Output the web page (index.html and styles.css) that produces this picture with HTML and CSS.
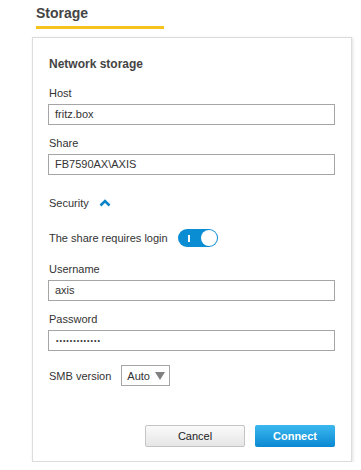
FILE: index.html
```html
<!DOCTYPE html>
<html lang="en">
<head>
    <meta charset="UTF-8">
    <meta name="viewport" content="width=device-width, initial-scale=1.0">
    <title>Storage</title>
    <link rel="stylesheet" href="styles.css">
</head>
<body>
    <div class="page">
        <div class="tab">
            <h2>Storage</h2>
        </div>

        <div class="card">
            <h3 class="card-title">Network storage</h3>

            <div class="field">
                <label>Host</label>
                <div class="input">fritz.box</div>
            </div>
            <div class="field share">
                <label>Share</label>
                <div class="input">FB7590AX\AXIS</div>
            </div>

            <div class="section-toggle">
                <span>Security</span>
                <svg class="chevron" width="12" height="8" viewBox="0 0 12 8">
                    <path d="M1.5 6.5 L6 2 L10.5 6.5" fill="none" stroke="#0a84c6" stroke-width="2.6"/>
                </svg>
            </div>

            <div class="switch-row">
                <span>The share requires login</span>
                <div class="switch on">
                    <span class="switch-mark"></span>
                    <span class="switch-knob"></span>
                </div>
            </div>

            <div class="field user">
                <label>Username</label>
                <div class="input">axis</div>
            </div>
            <div class="field share">
                <label>Password</label>
                <div class="input password">•••••••••••••</div>
            </div>

            <div class="select-row">
                <span>SMB version</span>
                <div class="select">Auto <span class="arrow"></span></div>
            </div>

            <div class="actions">
                <button class="btn">Cancel</button>
                <button class="btn primary">Connect</button>
            </div>
        </div>
    </div>
</body>
</html>
```

FILE: styles.css
```css
* {
    margin: 0;
    padding: 0;
    box-sizing: border-box;
}

body {
    font-family: "Liberation Sans", Arial, sans-serif;
    background: #fff;
    color: #333;
    font-size: 11px;
}

.page {
    padding: 5px 0 0 32px;
    width: 361px;
}

.tab {
    margin-left: 4px;
    width: 128px;
    border-bottom: 3px solid #f7c11e;
    padding-bottom: 4px;
}

.tab h2 {
    font-size: 14px;
    line-height: 17px;
    color: #444;
}

.card {
    margin-top: 8px;
    width: 320px;
    border: 1px solid #dcdcdc;
    box-shadow: 1px 1px 3px rgba(0, 0, 0, 0.12);
    padding: 18px 16px 14px 15px;
}

.card-title {
    font-size: 12px;
    line-height: 16px;
    color: #444;
    margin-left: 1px;
}

.field {
    margin-top: 14px;
}

.field.share {
    margin-top: 11px;
}

.field.user {
    margin-top: 15px;
}

.field label {
    display: block;
    margin-left: 1px;
    line-height: 14px;
    margin-bottom: 4px;
}

.input {
    height: 21px;
    border: 1px solid #a5a5a5;
    padding: 0 6px;
    line-height: 19px;
    font-size: 11px;
    color: #333;
}

.input.password {
    font-size: 7px;
    letter-spacing: 1px;
    padding-left: 7px;
}

.section-toggle {
    margin-top: 18px;
    margin-left: 1px;
    height: 20px;
    display: flex;
    align-items: center;
    gap: 10px;
}

.switch-row {
    margin-top: 16px;
    margin-left: 1px;
    display: flex;
    align-items: center;
    gap: 10px;
}

.switch {
    position: relative;
    width: 40px;
    height: 18px;
    border-radius: 9px;
    background: #0b8dd4;
}

.switch-mark {
    position: absolute;
    left: 10px;
    top: 6px;
    width: 2px;
    height: 7px;
    background: #fff;
}

.switch-knob {
    position: absolute;
    right: 1px;
    top: 1px;
    width: 16px;
    height: 16px;
    border-radius: 50%;
    background: #fff;
}

.select-row {
    margin-top: 14px;
    margin-left: 1px;
    display: flex;
    align-items: center;
    gap: 10px;
}

.select {
    width: 49px;
    height: 21px;
    border: 1px solid #a5a5a5;
    padding-left: 5px;
    display: flex;
    align-items: center;
    gap: 5px;
}

.select .arrow {
    width: 0;
    height: 0;
    border-left: 5px solid transparent;
    border-right: 5px solid transparent;
    border-top: 8px solid #808080;
}

.actions {
    margin-top: 39px;
    display: flex;
    justify-content: flex-end;
    gap: 10px;
}

.btn {
    width: 100px;
    height: 22px;
    font-family: "Liberation Sans", Arial, sans-serif;
    font-size: 11px;
    color: #222;
    border: 1px solid #c4c4c4;
    background: linear-gradient(#fafafa, #e6e6e6);
    border-radius: 2px;
}

.btn.primary {
    width: 80px;
    border: none;
    color: #fff;
    font-weight: bold;
    background: linear-gradient(#3cb8ef, #0a88d2);
}
```
